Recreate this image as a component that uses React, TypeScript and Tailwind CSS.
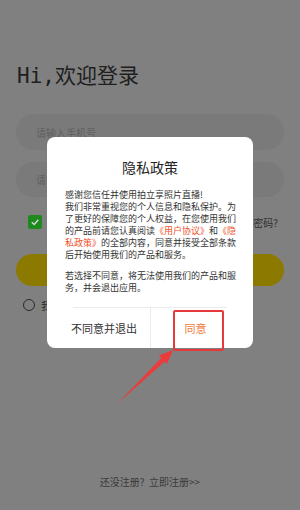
import React from 'react';

const cjk = { fontFamily: '"Noto Sans CJK SC", "Noto Sans", sans-serif' };

const App: React.FC = () => {
    return (
        <div className="relative w-[300px] h-[510px] overflow-hidden bg-[#808080] flex flex-col" style={cjk}>
            {/* Login page (dimmed) */}
            <div className="px-[16px]">
                <h1
                    className="pt-[61px] pl-[1px] text-[21px] leading-[30px] text-[#1e1e1e]"
                    style={{ fontFamily: '"DejaVu Sans Mono", "Noto Sans CJK SC", monospace' }}
                >
                    Hi,欢迎登录
                </h1>

                <div className="mt-[23px] h-[36px] rounded-full bg-[#7a7a7a] flex items-center pl-[20px]">
                    <span className="text-[10px] text-[#5f5f5f]">请输入手机号</span>
                </div>
                <div className="mt-[12px] h-[35px] rounded-full bg-[#7a7a7a] flex items-center pl-[20px]">
                    <span className="text-[10px] text-[#5f5f5f]">请输入密码</span>
                </div>

                <div className="mt-[18px] h-[14px] flex items-center justify-between">
                    <div className="ml-[12px] w-[14px] h-[14px] rounded-[2px] bg-[#1e8a1e] flex items-center justify-center">
                        <svg width="10" height="10" viewBox="0 0 10 10">
                            <path d="M1.8 5.2 L4.2 7.4 L8.3 2.8" fill="none" stroke="#d8d8d8" strokeWidth="1.4" />
                        </svg>
                    </div>
                    <span className="mr-[6px] text-[10px] text-[#303030]">忘记密码?</span>
                </div>

                <div className="mt-[25px] h-[32px] rounded-full bg-[#8c7900]" />

                <div className="mt-[13px] h-[12px] flex items-center gap-[6px] ml-[7px]">
                    <div className="w-[12px] h-[12px] rounded-full border border-[#2a2a2a]" />
                    <span className="text-[10px] text-[#2a2a2a]">我已阅读并同意</span>
                </div>
            </div>

            <div className="mt-auto pb-[21px] text-center text-[10px] leading-[14px] text-[#3a3a3a]">
                还没注册?&nbsp;&nbsp;立即注册&gt;&gt;
            </div>

            {/* Privacy dialog */}
            <div className="absolute left-[47px] top-[137px] w-[206px] h-[211px] rounded-[8px] bg-white flex flex-col">
                <h2 className="pt-[20px] text-center text-[14px] leading-[20px] text-[#222]">隐私政策</h2>
                <div className="mt-[12px] pl-[18px] text-[9px] leading-[12px] text-[#333] whitespace-nowrap">
                    <p>感谢您信任并使用拍立享照片直播!</p>
                    <p>我们非常重视您的个人信息和隐私保护。为</p>
                    <p>了更好的保障您的个人权益，在您使用我们</p>
                    <p>
                        的产品前请您认真阅读<span className="text-[#f0522e]">《用户协议》</span>和<span className="text-[#f0522e]">《隐</span>
                    </p>
                    <p>
                        <span className="text-[#f0522e]">私政策》</span>的全部内容，同意并接受全部条款
                    </p>
                    <p>后开始使用我们的产品和服务。</p>
                    <p className="mt-[9px]">若选择不同意，将无法使用我们的产品和服</p>
                    <p>务，并会退出应用。</p>
                </div>
                <div className="mt-auto mx-[26px] border-t border-[#ececec]" />
                <div className="h-[40px] flex">
                    <div className="w-[103px] pl-[11px] flex items-center justify-center text-[11px] text-[#333]">
                        不同意并退出
                    </div>
                    <div className="w-px bg-[#ececec]" />
                    <div className="flex-1 pr-[13px] flex items-center justify-center text-[11px] text-[#f07a3c]">
                        同意
                    </div>
                </div>
            </div>

            {/* Annotation: highlight box and arrow */}
            <div className="absolute left-[173px] top-[310px] w-[51px] h-[41px] border-2 border-[#e8393a] rounded-[2px]" />
            <svg className="absolute left-0 top-0" width="300" height="510" viewBox="0 0 300 510">
                <polygon
                    points="117,404 161.3,357.9 158.9,355.4 173,350 167.1,364 164.7,361.5"
                    fill="#ec3b3b"
                />
            </svg>
        </div>
    );
};

export default App;
